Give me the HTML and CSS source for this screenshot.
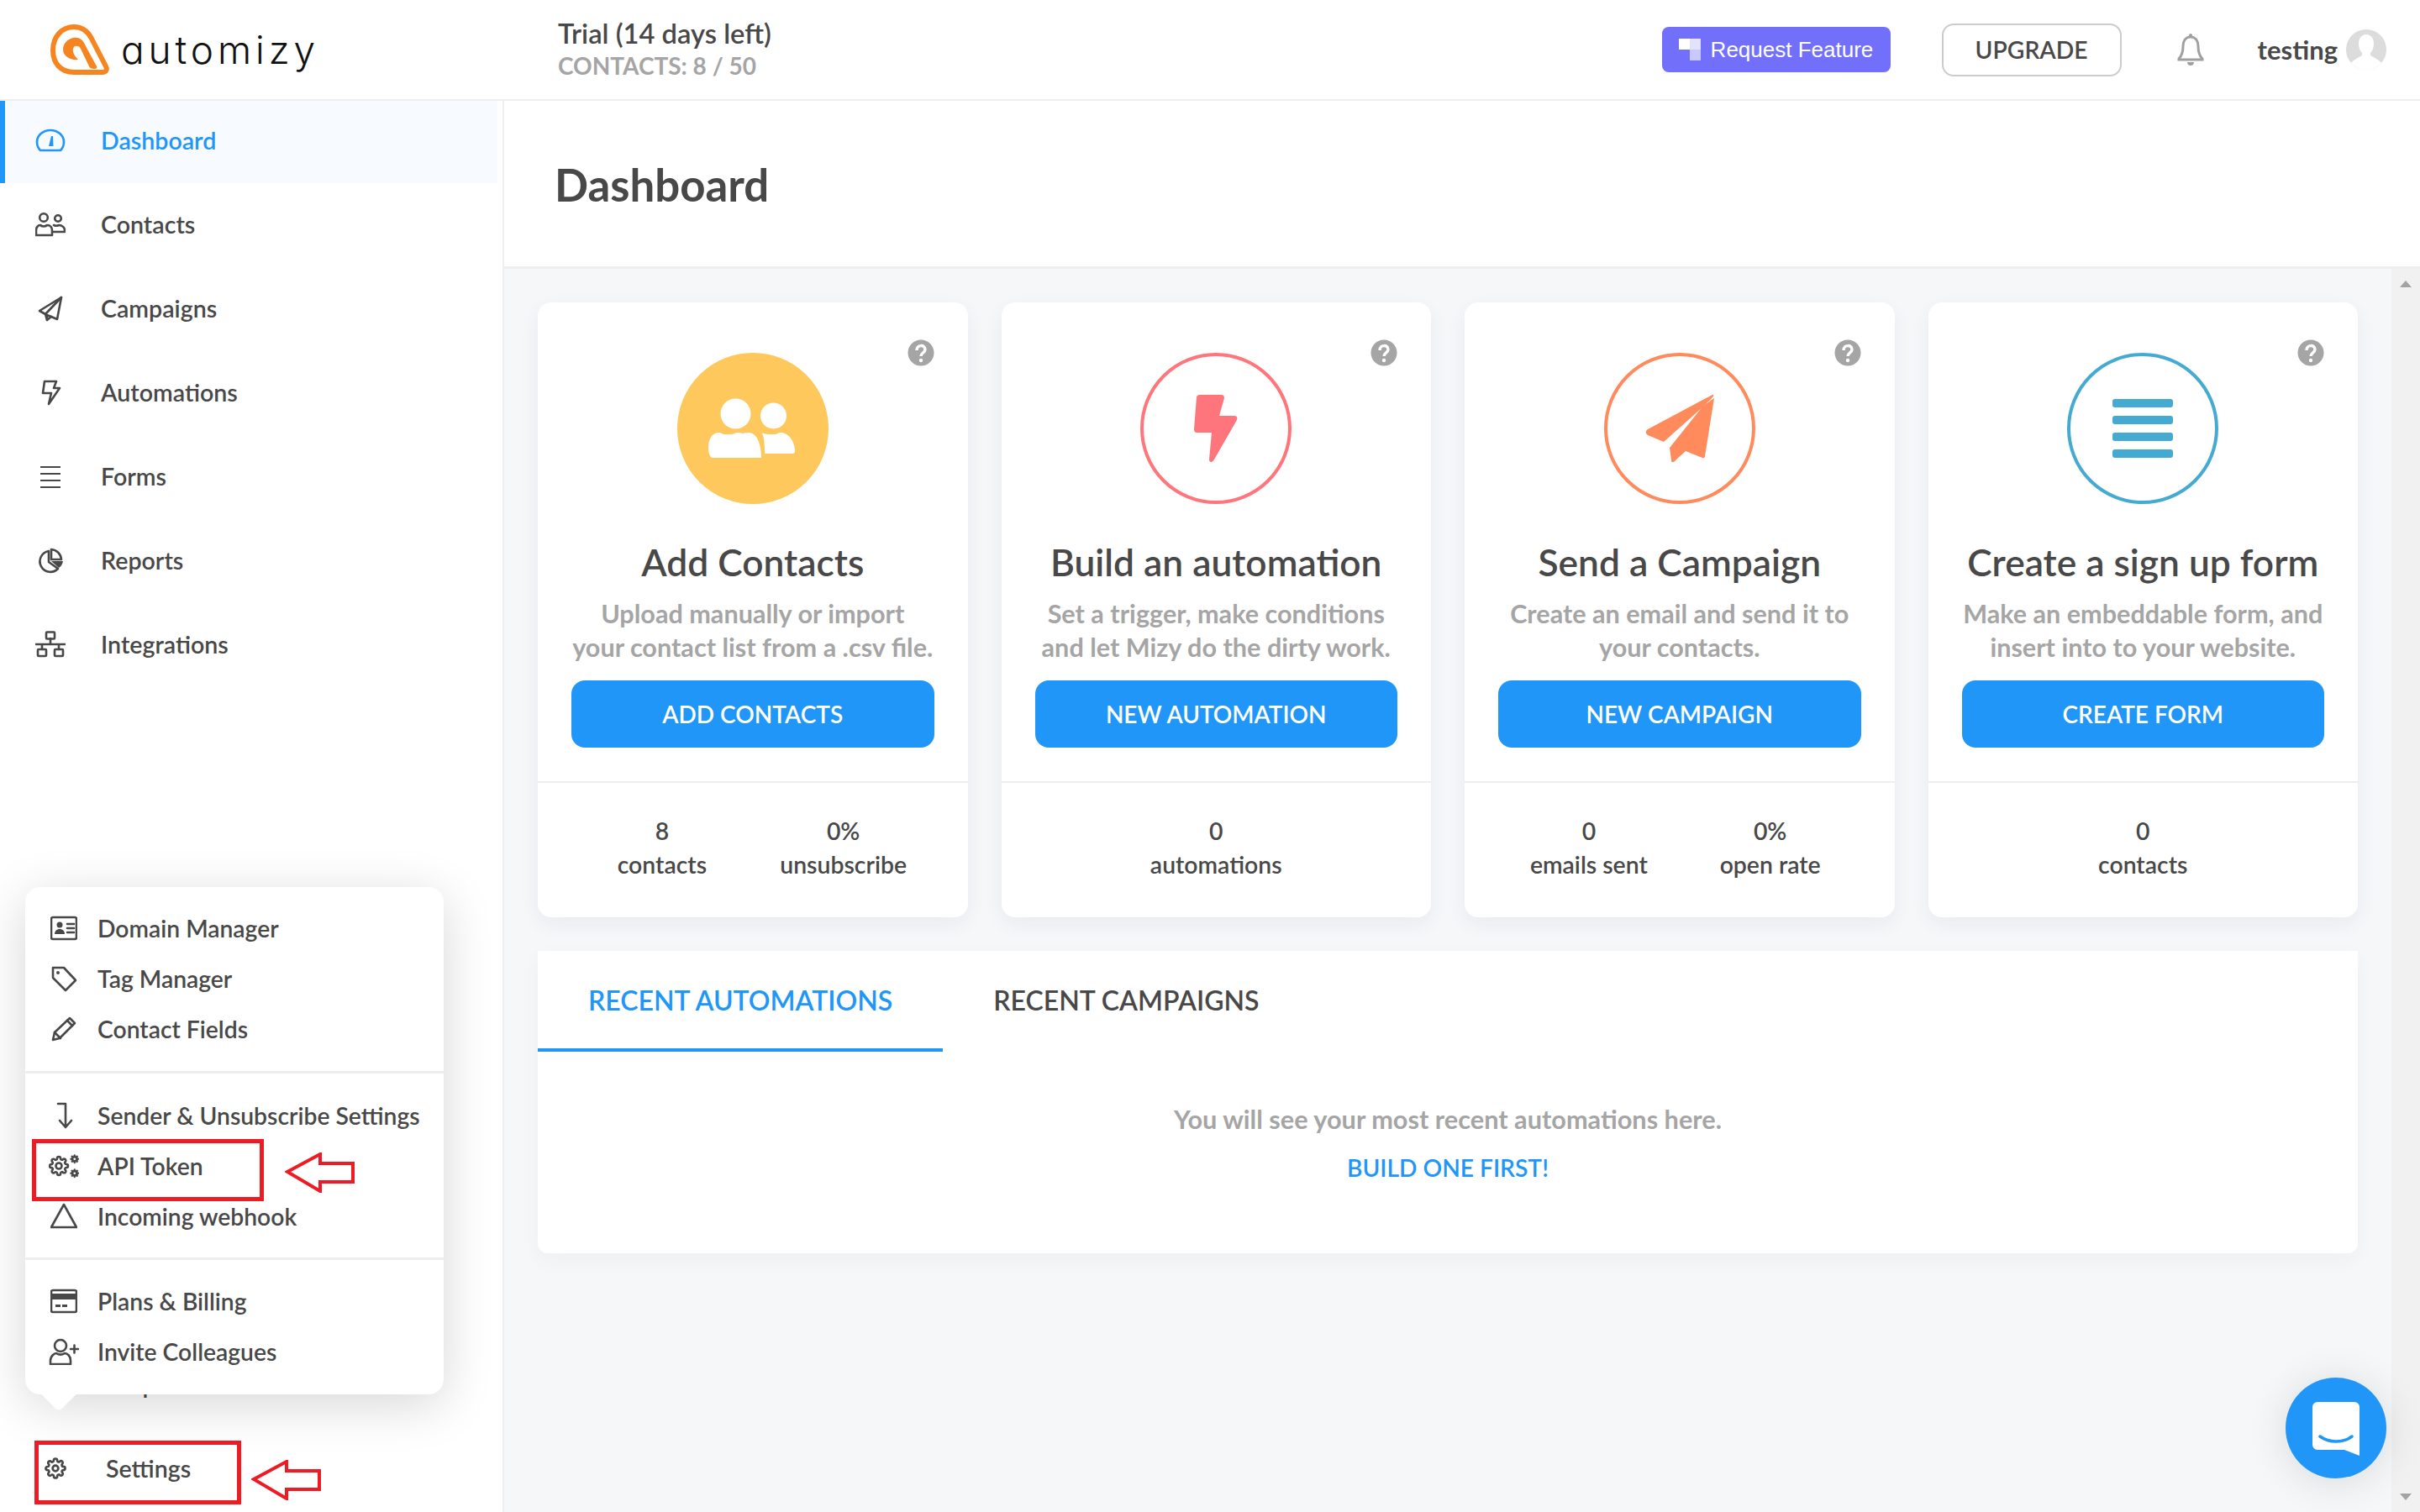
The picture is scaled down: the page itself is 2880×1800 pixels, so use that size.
FILE: index.html
```html
<!DOCTYPE html>
<html lang="en">
<head>
<meta charset="utf-8">
<title>Automizy Dashboard</title>
<link rel="stylesheet" href="styles.css">
</head>
<body>
<svg class="defs" width="0" height="0"><defs>
  <path id="gear" d="M19.400 15a1.650 1.650 0 0 0 .33 1.820l.06.06a2 2 0 0 1 0 2.830 2 2 0 0 1-2.830 0l-.06-.06a1.650 1.650 0 0 0-1.820-.33 1.650 1.650 0 0 0-1 1.510V21a2 2 0 0 1-2 2 2 2 0 0 1-2-2v-.09A1.650 1.650 0 0 0 9 19.400a1.650 1.650 0 0 0-1.820.33l-.06.06a2 2 0 0 1-2.830 0 2 2 0 0 1 0-2.830l.06-.06a1.650 1.650 0 0 0 .33-1.820 1.650 1.650 0 0 0-1.510-1H3a2 2 0 0 1-2-2 2 2 0 0 1 2-2h.09A1.650 1.650 0 0 0 4.600 9a1.650 1.650 0 0 0-.33-1.820l-.06-.06a2 2 0 0 1 0-2.830 2 2 0 0 1 2.830 0l.06.06a1.650 1.650 0 0 0 1.820.33H9a1.650 1.650 0 0 0 1-1.510V3a2 2 0 0 1 2-2 2 2 0 0 1 2 2v.09a1.650 1.650 0 0 0 1 1.510 1.650 1.650 0 0 0 1.820-.33l.06-.06a2 2 0 0 1 2.830 0 2 2 0 0 1 0 2.830l-.06.06a1.650 1.650 0 0 0-.33 1.820V9a1.650 1.650 0 0 0 1.510 1H21a2 2 0 0 1 2 2 2 2 0 0 1-2 2h-.09a1.650 1.650 0 0 0-1.510 1z"/>
</defs></svg>
<header class="topbar">
  <div class="logo">
    <svg class="logo-mark" viewBox="0 0 70 60"><path class="logo-out" d="M28 57C12 57 3 46 3 31 3 14 14 3 28 3c11 0 17 6 21 14l17 33c2 4 0 7-4 7z"/><path class="logo-in" d="M24 17c8-3 14 0 17 7l14 26c1 2 0 3-3 3s-5-1-6-3L36 29c-1-3-4-4-7-3-3 2-4 8 4 16-9 1-18-4-18-12 0-6 4-11 9-13z"/></svg>
    <span class="logo-text">automizy</span>
  </div>
  <div class="trial">
    <div class="trial-name">Trial (14 days left)</div>
    <div class="trial-count">CONTACTS: 8 / 50</div>
  </div>
  <div class="top-actions">
    <a class="request"><svg class="request-icon" viewBox="0 0 26 26"><rect width="13" height="13" x="0" y="0" fill="#fff"/><rect width="13" height="13" x="13" y="0" fill="#e2e1fe"/><rect width="13" height="13" x="13" y="13" fill="#c9c8fd"/></svg>Request Feature</a>
    <a class="upgrade">UPGRADE</a>
    <svg class="bell" viewBox="0 0 34 40"><path d="M17 5c-6 0-9 5-9 11 0 7-1 11-5 15v1h28v-1c-4-4-5-8-5-15 0-6-3-11-9-11z"/><path class="bell-fill" d="M17 1a2 2 0 0 1 2 2v2h-4V3a2 2 0 0 1 2-2zM13 35h8a4 4 0 0 1-8 0z"/></svg>
    <span class="user">testing</span>
    <svg class="avatar" viewBox="0 0 48 48"><circle cx="24" cy="24" r="24" fill="#dcdcdc"/><path fill="#fff" d="M24 6c6 0 9 5 9 11 0 5-2 9-4 11v3c3 2 9 4 13 9a24 24 0 0 1-36 0c4-5 10-7 13-9v-3c-2-2-4-6-4-11 0-6 3-11 9-11z"/></svg>
  </div>
</header>

<div class="shell">
  <aside class="sidebar">
    <nav class="nav">
      <a class="nav-item active"><svg class="ico" viewBox="0 0 36 36"><path d="M6 30h24c2-2 4-6 4-10a16 14 0 0 0-32 0c0 4 2 8 4 10z"/><path class="solid" d="M16 25l3-12h2l.5 12z"/></svg><span>Dashboard</span></a>
      <a class="nav-item"><svg class="ico" viewBox="0 0 36 36"><circle cx="10" cy="10" r="4.800"/><circle cx="27" cy="11" r="3.800"/><path d="M1 31v-6c0-3 2-6 5-6 2 2 6 2 8 0 4 0 6 3 6 6v6z"/><path d="M22 19c2 1 4 1 6 0 4 0 7 3 7 6v2H22"/></svg><span>Contacts</span></a>
      <a class="nav-item"><svg class="ico" viewBox="0 0 36 36"><path d="M31 5 5 21l7 4 2 7 5-4 7 3z"/><path d="M31 5 12 25"/><path d="M14 32v-6l5 2"/></svg><span>Campaigns</span></a>
      <a class="nav-item"><svg class="ico" viewBox="0 0 36 36"><path d="M11 5h14l-3 8h7L16 32l3-13H9z"/></svg><span>Automations</span></a>
      <a class="nav-item"><svg class="ico" viewBox="0 0 36 36"><path class="flat" d="M6 7h24M6 15h24M6 23h24M6 31h24"/></svg><span>Forms</span></a>
      <a class="nav-item"><svg class="ico" viewBox="0 0 36 36"><path d="M16 7a12.500 12.500 0 1 0 11 21l-11-8z"/><path d="M19 5a13 13 0 0 1 12 12H19z"/><path class="solid" d="M19 19h14c-1 4-2 6-5 8z"/></svg><span>Reports</span></a>
      <a class="nav-item"><svg class="ico" viewBox="0 0 36 32"><rect x="13" y="1.500" width="10" height="8" rx="1"/><rect x="3" y="22" width="10" height="8" rx="1"/><rect x="23" y="22" width="10" height="8" rx="1"/><path d="M18 9v7M0 16h36M8 16v6M28 16v6"/></svg><span>Integrations</span></a>
    </nav>
    <nav class="nav nav-bottom">
      <a class="nav-item nav-sub"><span class="ico-gap"></span><span>Help</span></a>
      <a class="nav-item nav-sub"><svg class="ico" viewBox="-5.200 -5.200 34.400 34.400"><use href="#gear"/><circle cx="12" cy="12" r="3.200"/></svg><span>Settings</span></a>
    </nav>
  </aside>

  <main class="main">
    <section class="page-head"><h1>Dashboard</h1></section>
    <div class="scroll-wrap">
      <div class="content">
        <div class="cards">
          <article class="card">
            <svg class="help-ico" viewBox="0 0 32 32"><circle cx="16" cy="16" r="15.500" fill="#a5a5a5"/><path class="qmark" d="M11 13c0-7 10-7 10-1 0 4-5 4-5 8"/><circle cx="16" cy="25" r="2.200" fill="#fff"/></svg>
            <div class="disc disc-yellow"><svg viewBox="0 0 180 180"><circle cx="69.500" cy="72.500" r="18" fill="#fff"/><circle cx="114.500" cy="75" r="15.500" fill="#fff"/><path fill="#fff" d="M37 113c0-10 4-18 13-18 2 0 4 2 6 2h8c3 0 5-2 8-2 2 0 4 0 6 1 2-1 4-1 7-1 10 0 15 14 15 30H42c-3 0-5-6-5-12z"/><path fill="#fff" d="M103 120c0-10 0-19-3-24 3-1 5 1 8 1h8c3 0 4-2 7-2 9 0 17 10 17 22 0 2-1 3-3 3z"/><path d="M100 96c4 8 3 20 3 30" stroke="#ffc85c" stroke-width="2" fill="none"/></svg></div>
            <h2>Add Contacts</h2>
            <p>Upload manually or import<br>your contact list from a .csv file.</p>
            <a class="cta">ADD CONTACTS</a>
            <div class="stats"><div><b>8</b><span>contacts</span></div><div><b>0%</b><span>unsubscribe</span></div></div>
          </article>
          <article class="card">
            <svg class="help-ico" viewBox="0 0 32 32"><circle cx="16" cy="16" r="15.500" fill="#a5a5a5"/><path class="qmark" d="M11 13c0-7 10-7 10-1 0 4-5 4-5 8"/><circle cx="16" cy="25" r="2.200" fill="#fff"/></svg>
            <div class="disc disc-red"><svg viewBox="0 0 180 180"><path fill="#ff757c" d="M71 50h26c2 0 3 2 3 4l-6 21h18c3 0 4 2 3 5l-27 47c-2 4-6 4-6 0l3-32H67c-2 0-3-2-3-4l3-38c0-2 2-3 4-3z"/></svg></div>
            <h2>Build an automation</h2>
            <p>Set a trigger, make conditions<br>and let Mizy do the dirty work.</p>
            <a class="cta">NEW AUTOMATION</a>
            <div class="stats"><div><b>0</b><span>automations</span></div></div>
          </article>
          <article class="card">
            <svg class="help-ico" viewBox="0 0 32 32"><circle cx="16" cy="16" r="15.500" fill="#a5a5a5"/><path class="qmark" d="M11 13c0-7 10-7 10-1 0 4-5 4-5 8"/><circle cx="16" cy="25" r="2.200" fill="#fff"/></svg>
            <div class="disc disc-orange"><svg viewBox="0 0 180 180"><path fill="#ff8a5c" d="M127 51c2-2 4-1 3 1l-13 13-46 41-19-8c-3-2-3-5 0-7z"/><path fill="#ff8a5c" d="M131 54l-11 69c0 2-2 3-3 2l-20-8-12 11c-2 3-5 3-5 0l-2-15 40-50z"/></svg></div>
            <h2>Send a Campaign</h2>
            <p>Create an email and send it to<br>your contacts.</p>
            <a class="cta">NEW CAMPAIGN</a>
            <div class="stats"><div><b>0</b><span>emails sent</span></div><div><b>0%</b><span>open rate</span></div></div>
          </article>
          <article class="card">
            <svg class="help-ico" viewBox="0 0 32 32"><circle cx="16" cy="16" r="15.500" fill="#a5a5a5"/><path class="qmark" d="M11 13c0-7 10-7 10-1 0 4-5 4-5 8"/><circle cx="16" cy="25" r="2.200" fill="#fff"/></svg>
            <div class="disc disc-blue"><svg viewBox="0 0 180 180"><rect x="54" y="55" width="72" height="10" rx="3" fill="#45aad2"/><rect x="54" y="75" width="72" height="10" rx="3" fill="#45aad2"/><rect x="54" y="95" width="72" height="10" rx="3" fill="#45aad2"/><rect x="54" y="115" width="72" height="10" rx="3" fill="#45aad2"/></svg></div>
            <h2>Create a sign up form</h2>
            <p>Make an embeddable form, and<br>insert into to your website.</p>
            <a class="cta">CREATE FORM</a>
            <div class="stats"><div><b>0</b><span>contacts</span></div></div>
          </article>
        </div>
        <section class="recent">
          <div class="tabs"><a class="tab tab-on">RECENT AUTOMATIONS</a><a class="tab">RECENT CAMPAIGNS</a></div>
          <div class="empty"><p>You will see your most recent automations here.</p><a>BUILD ONE FIRST!</a></div>
        </section>
      </div>
      <div class="scrollbar"><i class="arrow-up"></i><i class="arrow-down"></i></div>
    </div>
  </main>
</div>

<div class="popup">
  <div class="pop-group">
    <a class="pop-item"><svg class="ico" viewBox="0 0 32 28"><rect x="1" y="1" width="30" height="26" rx="2"/><circle class="solid" cx="11" cy="10" r="3.500"/><path class="solid" d="M5 21c0-8 12-8 12 0z"/><path d="M20 9h8M20 14h8M20 19h8"/></svg><span>Domain Manager</span></a>
    <a class="pop-item"><svg class="ico" viewBox="0 0 32 32"><path d="M3 3h13l14 15-12 12L3 15z"/><circle class="solid" cx="9" cy="9" r="2"/></svg><span>Tag Manager</span></a>
    <a class="pop-item"><svg class="ico" viewBox="0 0 32 32"><path d="M3 29l2-9L23 3l6 6-18 18z"/><path d="M5 20l7 7M20 6l6 6"/></svg><span>Contact Fields</span></a>
  </div>
  <div class="pop-group">
    <a class="pop-item"><svg class="ico" viewBox="0 0 32 32"><path d="M9 2h9v27M11 22l7 8 7-8"/></svg><span>Sender &amp; Unsubscribe Settings</span></a>
    <a class="pop-item"><svg class="ico ico-wide" viewBox="0 0 36 32"><use href="#gear" transform="translate(0 4)"/><circle cx="12" cy="16" r="3.500"/><g class="cog" transform="translate(25 2) scale(.48)"><use href="#gear"/><circle class="hole" cx="12" cy="12" r="2.800"/></g><g class="cog" transform="translate(25 19) scale(.48)"><use href="#gear"/><circle class="hole" cx="12" cy="12" r="2.800"/></g></svg><span>API Token</span></a>
    <a class="pop-item"><svg class="ico" viewBox="0 0 32 32"><path d="M16 2 31 29H1z"/></svg><span>Incoming webhook</span></a>
  </div>
  <div class="pop-group pop-last">
    <a class="pop-item"><svg class="ico" viewBox="0 0 32 28"><rect x="1" y="1" width="30" height="26" rx="2"/><path class="solid" d="M1 5h30v7H1zM6 18h6v3H6zM14 18h6v3h-6z"/></svg><span>Plans &amp; Billing</span></a>
    <a class="pop-item"><svg class="ico ico-wide" viewBox="0 0 36 32"><circle cx="14" cy="9" r="7"/><path d="M2 31v-4c0-6 5-9 7-9 3 2 7 2 10 0 3 0 7 3 7 9v4z"/><path d="M26 13h9M30.500 8.500v9"/></svg><span>Invite Colleagues</span></a>
  </div>
</div>

<div class="mark mark-api"></div>
<svg class="arrow arrow-api" viewBox="0 0 84 48"><path d="M3 23 42 2v11h39v22H42v11z"/></svg>
<div class="mark mark-settings"></div>
<svg class="arrow arrow-settings" viewBox="0 0 84 48"><path d="M3 23 42 2v11h39v22H42v11z"/></svg>

<a class="chat"><svg viewBox="0 0 56 64"><path fill="#fff" d="M6 0h44a6 6 0 0 1 6 6v58l-18-7H6a6 6 0 0 1-6-6V6a6 6 0 0 1 6-6z"/><path d="M9 41c11 8 27 8 38 0" fill="none" stroke="#2196f9" stroke-width="3.500" stroke-linecap="round"/></svg></a>
</body>
</html>
```

FILE: styles.css
```css
* { box-sizing: border-box; }
html, body { margin: 0; height: 100%; overflow: hidden; }
body {
  width: 2880px; height: 1800px;
  display: flex; flex-direction: column;
  font-family: "Lato Semibold", "Lato Medium", "Lato", "Liberation Sans", sans-serif;
  font-size: 28.6px; color: #484848; background: #fff;
}
a { color: inherit; text-decoration: none; }
.defs { position: absolute; }

.topbar {
  height: 120px; flex: none; display: flex; align-items: center;
  border-bottom: 2px solid #eee; padding-left: 60px; background: #fff;
}
.logo { width: 604px; display: flex; align-items: center; gap: 14px; }
.logo-mark { width: 70px; height: 60px; }
.logo-out { fill: none; stroke: #f7851f; stroke-width: 6; }
.logo-in { fill: #f7851f; }
.logo-text {
  font-family: "Inter", "Liberation Sans", sans-serif; font-weight: 300;
  font-size: 46px; letter-spacing: 4.9px; color: #111; font-feature-settings: "cv11";
}
.trial-name { font-size: 32.7px; line-height: 38px; }
.trial-count { font-family: "Lato", sans-serif; font-size: 28px; line-height: 38px; color: #a5a5a5; font-weight: 700; }
.top-actions { margin-left: auto; display: flex; align-items: center; padding-right: 40px; }
.request {
  width: 272px; height: 54px; display: flex; align-items: center; gap: 12px;
  padding-left: 20px; border-radius: 8px; background: #7270fa; color: #fff;
  font-family: "Liberation Sans", sans-serif; font-size: 26px;
}
.request-icon { width: 26px; height: 26px; }
.upgrade {
  width: 214px; height: 63px; margin-left: 61px; display: flex; align-items: center; justify-content: center;
  border: 2px solid #ccc; border-radius: 14px; font-size: 28.3px;
}
.bell { width: 34px; height: 40px; margin-left: 65px; }
.bell path { fill: none; stroke: #a0a0a0; stroke-width: 3; }
.bell .bell-fill { fill: #a0a0a0; stroke: none; }
.user { margin-left: 63px; font-family: "Lato", sans-serif; font-size: 31px; font-weight: 700; }
.avatar { width: 48px; height: 48px; margin-left: 10px; }

.shell { flex: 1; display: flex; min-height: 0; }
.sidebar {
  width: 600px; flex: none; border-right: 2px solid #eee; background: #fff;
  display: flex; flex-direction: column; justify-content: space-between;
}
.nav { display: flex; flex-direction: column; gap: 2px; }
.nav-item {
  height: 98px; display: flex; align-items: center; gap: 42px;
  padding: 0 0 4px 42px; margin-right: 6px;
}
.nav-item.active { width: 592px; background: #f7faff; color: #2196f9; border-left: 6px solid #2196f9; padding-left: 36px; }
.nav-sub { padding-left: 48px; }
.nav-bottom { padding-bottom: 1px; }
.ico { width: 36px; height: 36px; flex: none; }
.ico * { fill: none; stroke: currentColor; stroke-width: 2.6; stroke-linejoin: round; stroke-linecap: round; }
.ico .solid { fill: currentColor; stroke: none; }
.ico .flat { stroke-width: 2; stroke-linecap: butt; }
.ico .cog use { fill: currentColor; stroke-width: 1; }
.ico .cog .hole { fill: #fff; stroke: none; }
.ico-gap { width: 36px; flex: none; }

.main { flex: 1; display: flex; flex-direction: column; min-width: 0; background: #f6f7f9; }
.page-head {
  height: 200px; flex: none; display: flex; align-items: center; padding-left: 60px;
  background: #fff; border-bottom: 3px solid #eee;
}
.page-head h1 { margin: 0; padding-top: 2px; font-family: "Lato", sans-serif; font-size: 52.8px; font-weight: 700; }
.scroll-wrap { flex: 1; display: flex; min-height: 0; }
.content { flex: 1; padding: 40px 40px 0; display: flex; flex-direction: column; gap: 40px; min-width: 0; }

.cards { display: grid; grid-template-columns: repeat(4, 1fr); gap: 40px; }
.card {
  position: relative; height: 732px; padding: 60px 40px 0; background: #fff; border-radius: 16px;
  box-shadow: 0 8px 24px rgba(30, 40, 60, .06); text-align: center;
  display: flex; flex-direction: column;
}
.help-ico { position: absolute; top: 44px; right: 40px; width: 32px; height: 32px; }
.qmark { fill: none; stroke: #fff; stroke-width: 3.5; }
.disc { width: 180px; height: 180px; margin: 0 auto; border-radius: 50%; border: 4px solid; }
.disc svg { display: block; width: 180px; height: 180px; margin: -4px; }
.disc-yellow { background: #ffc85c; border-color: #ffc85c; }
.disc-red { border-color: #ff757c; }
.disc-orange { border-color: #ff8a5c; }
.disc-blue { border-color: #45aad2; }
.card h2 { margin: 43px 0 0; font-size: 44.3px; line-height: 52px; font-weight: 400; }
.card p { margin: 16px -10px 0; font-family: "Lato", sans-serif; font-size: 30.6px; line-height: 40px; font-weight: 700; color: #a5a5a5; white-space: nowrap; }
.cta {
  height: 80px; margin-top: 19px; display: flex; align-items: center; justify-content: center;
  border-radius: 16px; background: #2196f9; color: #fff; font-size: 28px; padding-bottom: 1px;
}
.stats {
  margin: 40px -40px 0; padding: 37px 40px 0; border-top: 2px solid #eee;
  display: flex; font-size: 28.4px; line-height: 40px;
}
.stats div { flex: 1; display: flex; flex-direction: column; }
.stats b { font-weight: 400; }

.recent { height: 360px; background: #fff; border-radius: 0 0 12px 12px; box-shadow: 0 8px 24px rgba(30, 40, 60, .04); }
.tabs { display: flex; height: 120px; }
.tab { padding: 0 60px 3px; height: 120px; display: flex; align-items: center; font-size: 32px; }
.tab-on { color: #2196f9; border-bottom: 4px solid #2196f9; padding-bottom: 0; }
.empty { text-align: center; padding-top: 61px; }
.empty p { margin: 0; font-family: "Lato", sans-serif; font-size: 30.7px; line-height: 40px; font-weight: 700; color: #a5a5a5; }
.empty a { display: block; margin-top: 17px; font-size: 28.2px; line-height: 40px; color: #2196f9; }

.scrollbar { width: 34px; flex: none; background: #f1f1f1; position: relative; display: flex; flex-direction: column; justify-content: space-between; align-items: center; padding: 14px 0; }
.arrow-up { width: 0; height: 0; border: 7px solid transparent; border-top: 0; border-bottom: 8px solid #a3a3a3; }
.arrow-down { width: 0; height: 0; border: 7px solid transparent; border-bottom: 0; border-top: 8px solid #a3a3a3; }

.popup {
  position: absolute; left: 30px; top: 1056px; width: 498px; height: 604px; background: #fff; border-radius: 18px;
  box-shadow: 0 12px 60px rgba(0, 0, 0, .16);
}
.popup::after {
  content: ""; position: absolute; left: 24px; bottom: -14px; width: 32px; height: 32px; background: #fff;
  transform: rotate(45deg); border-radius: 0 0 6px 0;
}
.pop-group { padding: 20px 0 20px; border-bottom: 3px solid #eee; }
.pop-group:first-child { height: 222px; }
.pop-group:nth-child(2) { height: 222px; padding-top: 21px; }
.pop-last { border-bottom: 0; }
.pop-item { height: 60px; display: flex; align-items: center; gap: 24px; padding: 0 0 2px 30px; font-size: 28.3px; }
.pop-item .ico { width: 32px; height: 32px; }
.pop-item .ico-wide { width: 36px; margin-left: -2px; margin-right: -2px; }

.mark { position: absolute; border: 5px solid #ed1c24; }
.mark-api { left: 38px; top: 1356px; width: 276px; height: 74px; }
.mark-settings { left: 41px; top: 1715px; width: 246px; height: 76px; }
.arrow { position: absolute; width: 84px; height: 48px; }
.arrow path { fill: none; stroke: #ed1c24; stroke-width: 4; }
.arrow-api { left: 339px; top: 1372px; }
.arrow-settings { left: 299px; top: 1738px; }

.chat {
  position: absolute; left: 2720px; top: 1640px; width: 120px; height: 120px; border-radius: 50%;
  background: #2196f9; display: flex; align-items: center; justify-content: center;
  box-shadow: 0 4px 50px rgba(0, 0, 0, .12);
}
.chat svg { width: 56px; height: 64px; margin-top: 2px; }
```
